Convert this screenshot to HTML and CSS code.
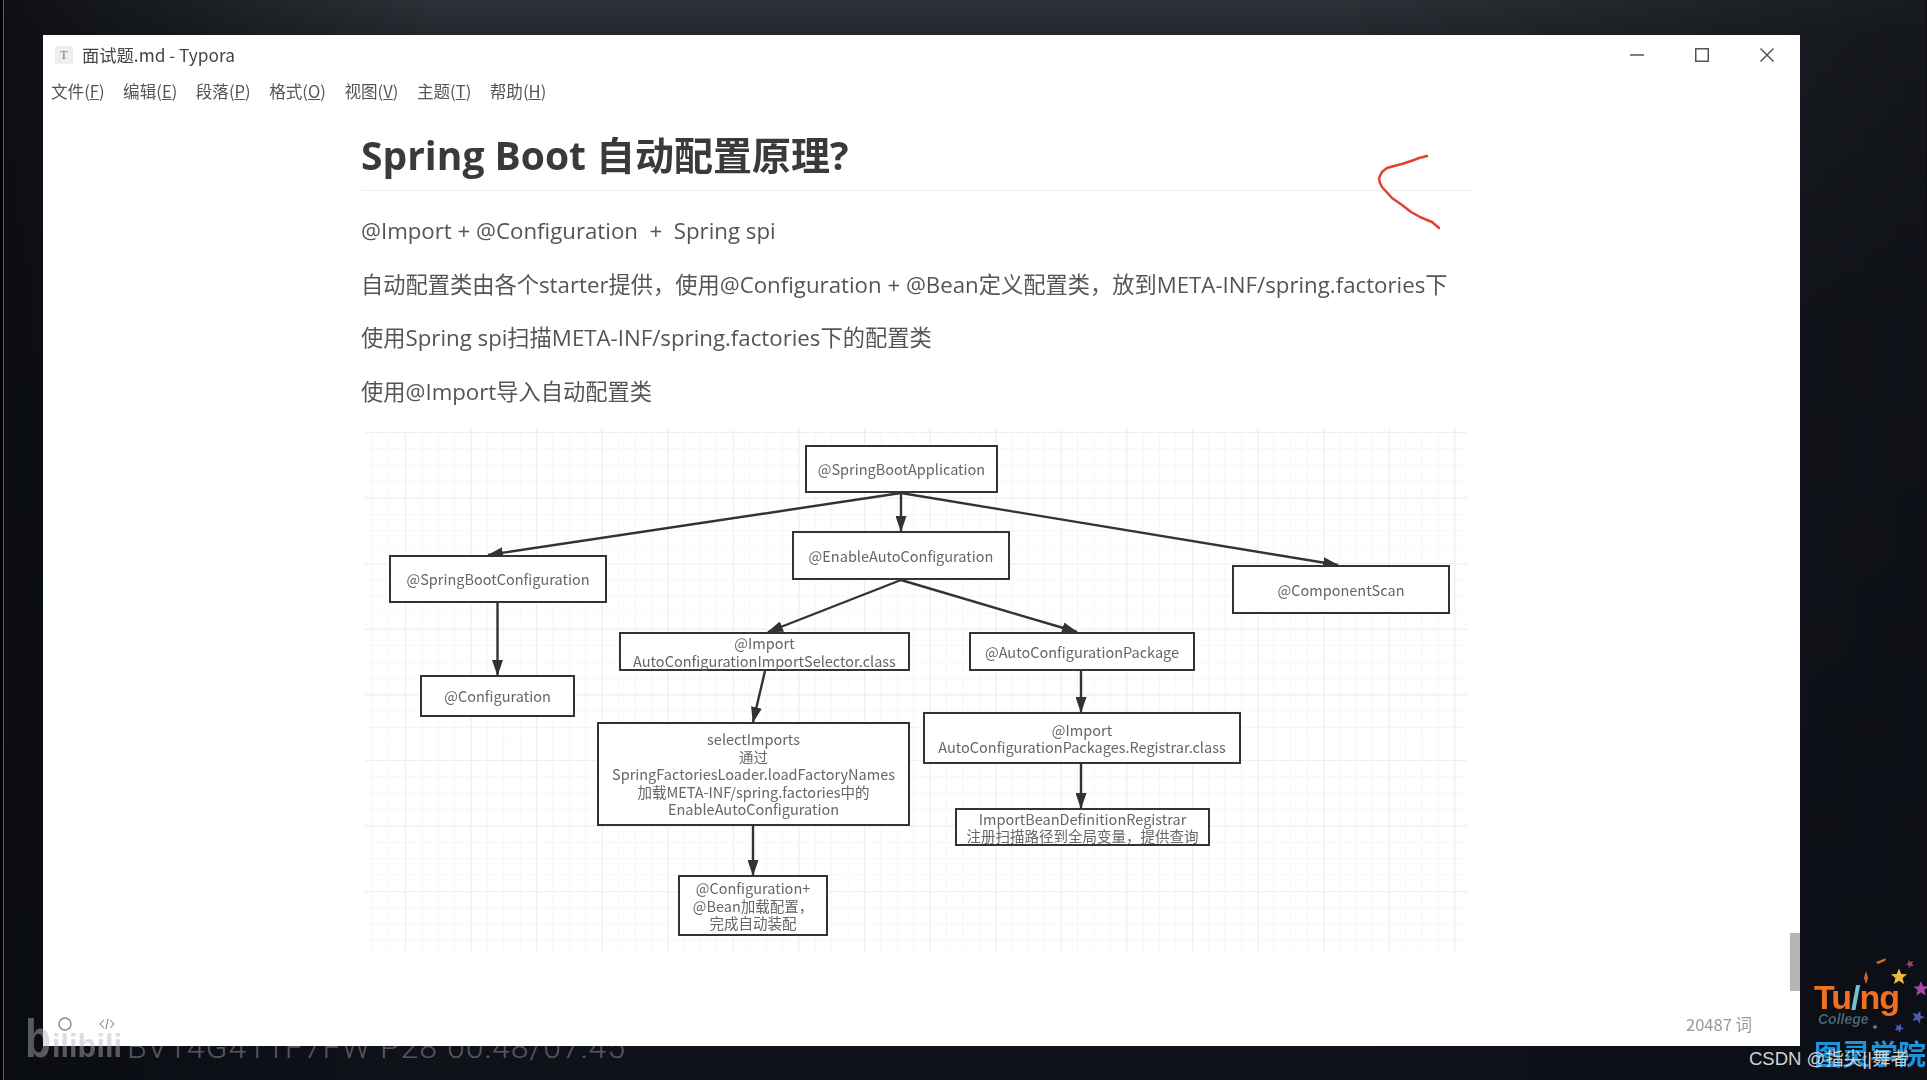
FILE: index.html
```html
<!DOCTYPE html>
<html lang="zh-CN">
<head>
  <meta charset="UTF-8" />
  <title>面试题.md - Typora</title>
  <link rel="stylesheet" href="styles.css">
</head>
<body>

  <div class="stage">

    <!-- video watermark, sits behind the window -->
    <div class="bili-id">BV14G411F7FW P28 00:48/07:45</div>

    <div class="window">
      <div class="titlebar">
        <div class="app-icon">T</div>
        <div class="app-title">面试题.md - Typora</div>
        <div class="win-controls">
          <svg class="win-btn" viewBox="0 0 14 14"><path d="M0 7H14" /></svg>
          <svg class="win-btn" viewBox="0 0 14 14"><path d="M.75 .75H13.25V13.25H.75Z" /></svg>
          <svg class="win-btn" viewBox="0 0 14 14"><path d="M.5 .5L13.5 13.5M13.5 .5L.5 13.5" /></svg>
        </div>
      </div>

      <div class="menubar">
        <span>文件(<u>F</u>)</span>
        <span>编辑(<u>E</u>)</span>
        <span>段落(<u>P</u>)</span>
        <span>格式(<u>O</u>)</span>
        <span>视图(<u>V</u>)</span>
        <span>主题(<u>T</u>)</span>
        <span>帮助(<u>H</u>)</span>
      </div>

      <div class="doc">
        <h1>Spring Boot 自动配置原理?</h1>
        <p>@Import + @Configuration &nbsp;+ &nbsp;Spring spi</p>
        <p>自动配置类由各个starter提供，使用@Configuration + @Bean定义配置类，放到META-INF/spring.factories下</p>
        <p>使用Spring spi扫描META-INF/spring.factories下的配置类</p>
        <p>使用@Import导入自动配置类</p>

        <div class="diagram">
          <svg class="arrows" viewBox="0 0 1102 522">
            <defs>
              <marker id="head" markerWidth="16" markerHeight="11" refX="15" refY="5.5" orient="auto" markerUnits="userSpaceOnUse">
                <path d="M0 0L16 5.5L0 11Z" fill="#333" />
              </marker>
            </defs>
            <line x1="536" y1="64" x2="536" y2="102" />
            <line x1="536" y1="64" x2="123" y2="126" />
            <line x1="536" y1="64" x2="973" y2="136" />
            <line x1="536" y1="151" x2="403" y2="203" />
            <line x1="536" y1="151" x2="712" y2="203" />
            <line x1="132.5" y1="174" x2="132.5" y2="246" />
            <line x1="400" y1="242" x2="388" y2="293" />
            <line x1="716" y1="242" x2="716" y2="283" />
            <line x1="716" y1="335" x2="716" y2="379" />
            <line x1="388" y1="397" x2="388" y2="446" />
          </svg>
          <div class="node n-app">@SpringBootApplication</div>
          <div class="node n-enable">@EnableAutoConfiguration</div>
          <div class="node n-sbc">@SpringBootConfiguration</div>
          <div class="node n-config">@Configuration</div>
          <div class="node n-selector">@Import<br>AutoConfigurationImportSelector.class</div>
          <div class="node n-package">@AutoConfigurationPackage</div>
          <div class="node n-scan">@ComponentScan</div>
          <div class="node n-select">selectImports<br>通过<br>SpringFactoriesLoader.loadFactoryNames<br>加载META-INF/spring.factories中的<br>EnableAutoConfiguration</div>
          <div class="node n-registrar">@Import<br>AutoConfigurationPackages.Registrar.class</div>
          <div class="node n-bean">ImportBeanDefinitionRegistrar<br>注册扫描路径到全局变量，提供查询</div>
          <div class="node n-confbean">@Configuration+<br>@Bean加载配置，<br>完成自动装配</div>
        </div>

        <!-- pen mark drawn over the page -->
        <svg class="pen-mark" viewBox="0 0 80 80">
          <path d="M63 2L55 4L50 6L44 8L38 10L30 12L23 14L18 18L15 24L16 29L18 33L28 44L38 51L47 58L56 63L63 66L68 68L75 74" />
        </svg>
      </div>

      <div class="statusbar">
        <svg class="status-icon" viewBox="0 0 16 16"><circle cx="8" cy="8" r="6" /></svg>
        <svg class="status-icon" viewBox="0 0 20 16"><path d="M6 3L1.5 8L6 13M14 3L18.5 8L14 13M11.5 1.5L8.5 14.5" /></svg>
        <div class="word-count">20487 词</div>
      </div>

      <div class="scroll-thumb"></div>
    </div>

    <!-- watermarks over the video -->
    <svg class="bili-logo" viewBox="0 -10 100 70">
      <text class="bili-big" x="2" y="43" textLength="26" lengthAdjust="spacingAndGlyphs">b</text>
      <text class="bili-small" x="29" y="43" textLength="70" lengthAdjust="spacingAndGlyphs">ilibili</text>
    </svg>

    <div class="turing">
      <svg class="turing-stars" viewBox="0 0 115 80">
        <defs>
          <path id="star" d="M0 -10L2.6 -3.4L9.5 -3.1L4.2 1.3L5.9 8.1L0 4.3L-5.9 8.1L-4.2 1.3L-9.5 -3.1L-2.6 -3.4Z" />
        </defs>
        <use class="star-gold" href="#star" transform="translate(85 22) scale(.85)" />
        <use class="star-purple" href="#star" transform="translate(107 34) scale(.8)" />
        <use class="star-blue" href="#star" transform="translate(104 62) rotate(20) scale(.7)" />
        <use class="star-blue" href="#star" transform="translate(85 73) rotate(25) scale(.5)" />
        <use class="star-teal" href="#star" transform="translate(61 72) rotate(30) scale(.3)" />
        <use class="star-pink" href="#star" transform="translate(96 9) rotate(-25) scale(.45)" />
        <path class="star-orange" d="M62 7L72 3L71 6L64 9Z" />
        <path class="star-orange" d="M52 16L54 23L52 29L50 23Z" />
      </svg>
      <div class="turing-name">Tu<span class="turing-i">/</span>ng</div>
      <div class="turing-sub">College</div>
      <div class="turing-cn">图灵学院</div>
    </div>
    <div class="csdn">CSDN @指尖||舞者</div>

  </div>

</body>
</html>
```

FILE: styles.css
```css
* {
  box-sizing: border-box;
}

html, body {
  margin: 0;
  height: 100%;
  overflow: hidden;
}

body {
  font-family: "Noto Sans CJK SC", sans-serif;
  background: #0e1016;
}

.stage {
  position: relative;
  width: 1927px;
  height: 1080px;
  padding: 35px 127px 35px 43px;
  background:
    linear-gradient(90deg, rgba(10, 12, 18, 0.9) 0, rgba(10, 12, 18, 0) 22%, rgba(10, 12, 18, 0) 70%, rgba(10, 12, 18, 0.6) 100%),
    linear-gradient(180deg, #2e3037 0, #24262d 34px, #181a21 300px, #10121a 1000px);
  border-left: 4px solid #000;
  box-shadow: inset 1px 0 0 #5c5e63;
  margin-left: -1px;
  padding-left: 40px;
}

/* Window */
.window {
  position: relative;
  display: flex;
  flex-direction: column;
  height: 1011px;
  width: 1757px;
  background: #fff;
  color: #333;
  filter: blur(0.6px);
}

.titlebar {
  display: flex;
  align-items: center;
  height: 39px;
  padding: 0 26px 0 12px;
}

.app-icon {
  width: 18px;
  height: 18px;
  margin-right: 9px;
  background: #eee;
  border-radius: 2px;
  color: #777;
  font-family: "Liberation Serif", serif;
  font-size: 12px;
  line-height: 18px;
  text-align: center;
}

.app-title {
  flex: 1;
  font-size: 17.3px;
  color: #444;
}

.win-controls {
  display: flex;
  gap: 51px;
}

.win-btn {
  width: 14px;
  height: 14px;
  fill: none;
  stroke: #555;
  stroke-width: 1.5;
}

.menubar {
  display: flex;
  gap: 18.5px;
  height: 33px;
  padding: 5px 0 0 8px;
  font-size: 16.6px;
  line-height: 24px;
  color: #555;
}

/* Document */
.doc {
  position: relative;
  flex: 1;
  padding-left: 318px;
}

h1 {
  width: 1112px;
  height: 84px;
  margin: 0 0 20px;
  padding-top: 22px;
  border-bottom: 1px solid #eee;
  font-family: "Open Sans", "Noto Sans CJK SC", sans-serif;
  font-size: 39px;
  line-height: 52px;
  font-weight: 700;
  color: #3a3a3a;
}

.doc p {
  margin: 0;
  height: 53.5px;
  font-family: "Open Sans", "Noto Sans CJK SC", sans-serif;
  font-size: 22.25px;
  line-height: 40px;
  color: #555;
  white-space: nowrap;
}

.diagram {
  position: relative;
  width: 1102px;
  height: 522px;
  margin: 4px 0 0 4px;
  background-color: #fff;
  background-image:
    linear-gradient(#eee 1px, transparent 1px),
    linear-gradient(90deg, #eee 1px, transparent 1px),
    linear-gradient(#f6f6f6 1px, transparent 1px),
    linear-gradient(90deg, #f6f6f6 1px, transparent 1px);
  background-size: 65.6px 65.6px, 65.6px 65.6px, 16.4px 16.4px, 16.4px 16.4px;
  background-position: 0 3px, 40px 0, 0 3px, 40px 0;
}

.arrows {
  position: absolute;
  left: 0;
  top: 0;
  width: 1102px;
  height: 522px;
}

.arrows line {
  stroke: #333;
  stroke-width: 2.4;
  marker-end: url(#head);
}

.node {
  position: absolute;
  display: flex;
  flex-direction: column;
  justify-content: center;
  text-align: center;
  background: #fff;
  border: 2.5px solid #333;
  font-size: 14.5px;
  line-height: 17.5px;
  color: #666;
  white-space: nowrap;
}

.n-app { left: 440px; top: 16px; width: 193px; height: 48px; }
.n-enable { left: 427px; top: 102px; width: 218px; height: 49px; }
.n-sbc { left: 24px; top: 126px; width: 218px; height: 48px; }
.n-config { left: 55px; top: 246px; width: 155px; height: 42px; }
.n-selector { left: 254px; top: 203px; width: 291px; height: 39px; }
.n-package { left: 604px; top: 203px; width: 226px; height: 39px; }
.n-scan { left: 867px; top: 136px; width: 218px; height: 49px; }
.n-select { left: 232px; top: 293px; width: 313px; height: 104px; }
.n-registrar { left: 558px; top: 283px; width: 318px; height: 52px; }
.n-bean { left: 590px; top: 379px; width: 255px; height: 38px; }
.n-confbean { left: 313px; top: 446px; width: 150px; height: 61px; }

.pen-mark {
  position: absolute;
  left: 1321px;
  top: 47px;
  width: 80px;
  height: 80px;
  fill: none;
  stroke: #e2412f;
  stroke-width: 2.5;
  stroke-linejoin: round;
  stroke-linecap: round;
}

/* Status bar */
.statusbar {
  display: flex;
  align-items: center;
  gap: 26px;
  height: 41px;
  padding: 0 48px 4px 14px;
}

.status-icon {
  width: 16px;
  height: 16px;
  fill: none;
  stroke: #888;
  stroke-width: 1.4;
}

.word-count {
  margin-left: auto;
  font-size: 16.5px;
  color: #999;
}

.scroll-thumb {
  position: absolute;
  right: 0;
  top: 898px;
  width: 10px;
  height: 58px;
  background: #b5b5b5;
}

/* Watermarks */
.bili-id {
  position: absolute;
  left: 124px;
  top: 1027px;
  font-family: "Roboto", sans-serif;
  font-size: 32px;
  font-weight: 300;
  line-height: 40px;
  letter-spacing: 1px;
  color: #55575c;
}

.bili-logo {
  position: absolute;
  left: 20px;
  top: 1004px;
  width: 100px;
  height: 70px;
  opacity: 0.45;
  filter: blur(0.5px);
}

.bili-big,
.bili-small {
  font-family: "Liberation Sans", sans-serif;
  font-weight: 700;
  fill: #b4b6bb;
}

.bili-big {
  font-size: 54px;
}

.bili-small {
  font-size: 34px;
}

.turing {
  position: absolute;
  left: 1811px;
  top: 955px;
  width: 115px;
  height: 115px;
  filter: blur(0.4px);
}

.turing-stars {
  position: absolute;
  left: 0;
  top: 0;
  width: 115px;
  height: 80px;
  overflow: visible;
}

.star-gold { fill: #f0b93a; }
.star-purple { fill: #a04aa8; }
.star-blue { fill: #4a5ab0; }
.star-teal { fill: #5a8a9a; }
.star-pink { fill: #a0406a; }
.star-orange { fill: #d8642c; }

.turing-name {
  position: absolute;
  left: 0;
  top: 20px;
  font-family: "Liberation Sans", sans-serif;
  font-size: 34px;
  font-weight: 700;
  line-height: 44px;
  letter-spacing: -1px;
  color: #f0701f;
}

.turing-i {
  color: #6cc5d0;
}

.turing-sub {
  position: absolute;
  left: 4px;
  top: 56px;
  font-family: "Liberation Sans", sans-serif;
  font-size: 14px;
  font-style: italic;
  font-weight: 700;
  color: #44626e;
}

.turing-cn {
  position: absolute;
  left: 0;
  top: 82px;
  font-size: 28px;
  font-weight: 700;
  line-height: 32px;
  color: #1d93dc;
}

.csdn {
  position: absolute;
  left: 1746px;
  top: 1046px;
  font-family: "Liberation Sans", "Noto Sans CJK SC", sans-serif;
  font-size: 18.5px;
  line-height: 26px;
  color: #d2d2d2;
}
```
